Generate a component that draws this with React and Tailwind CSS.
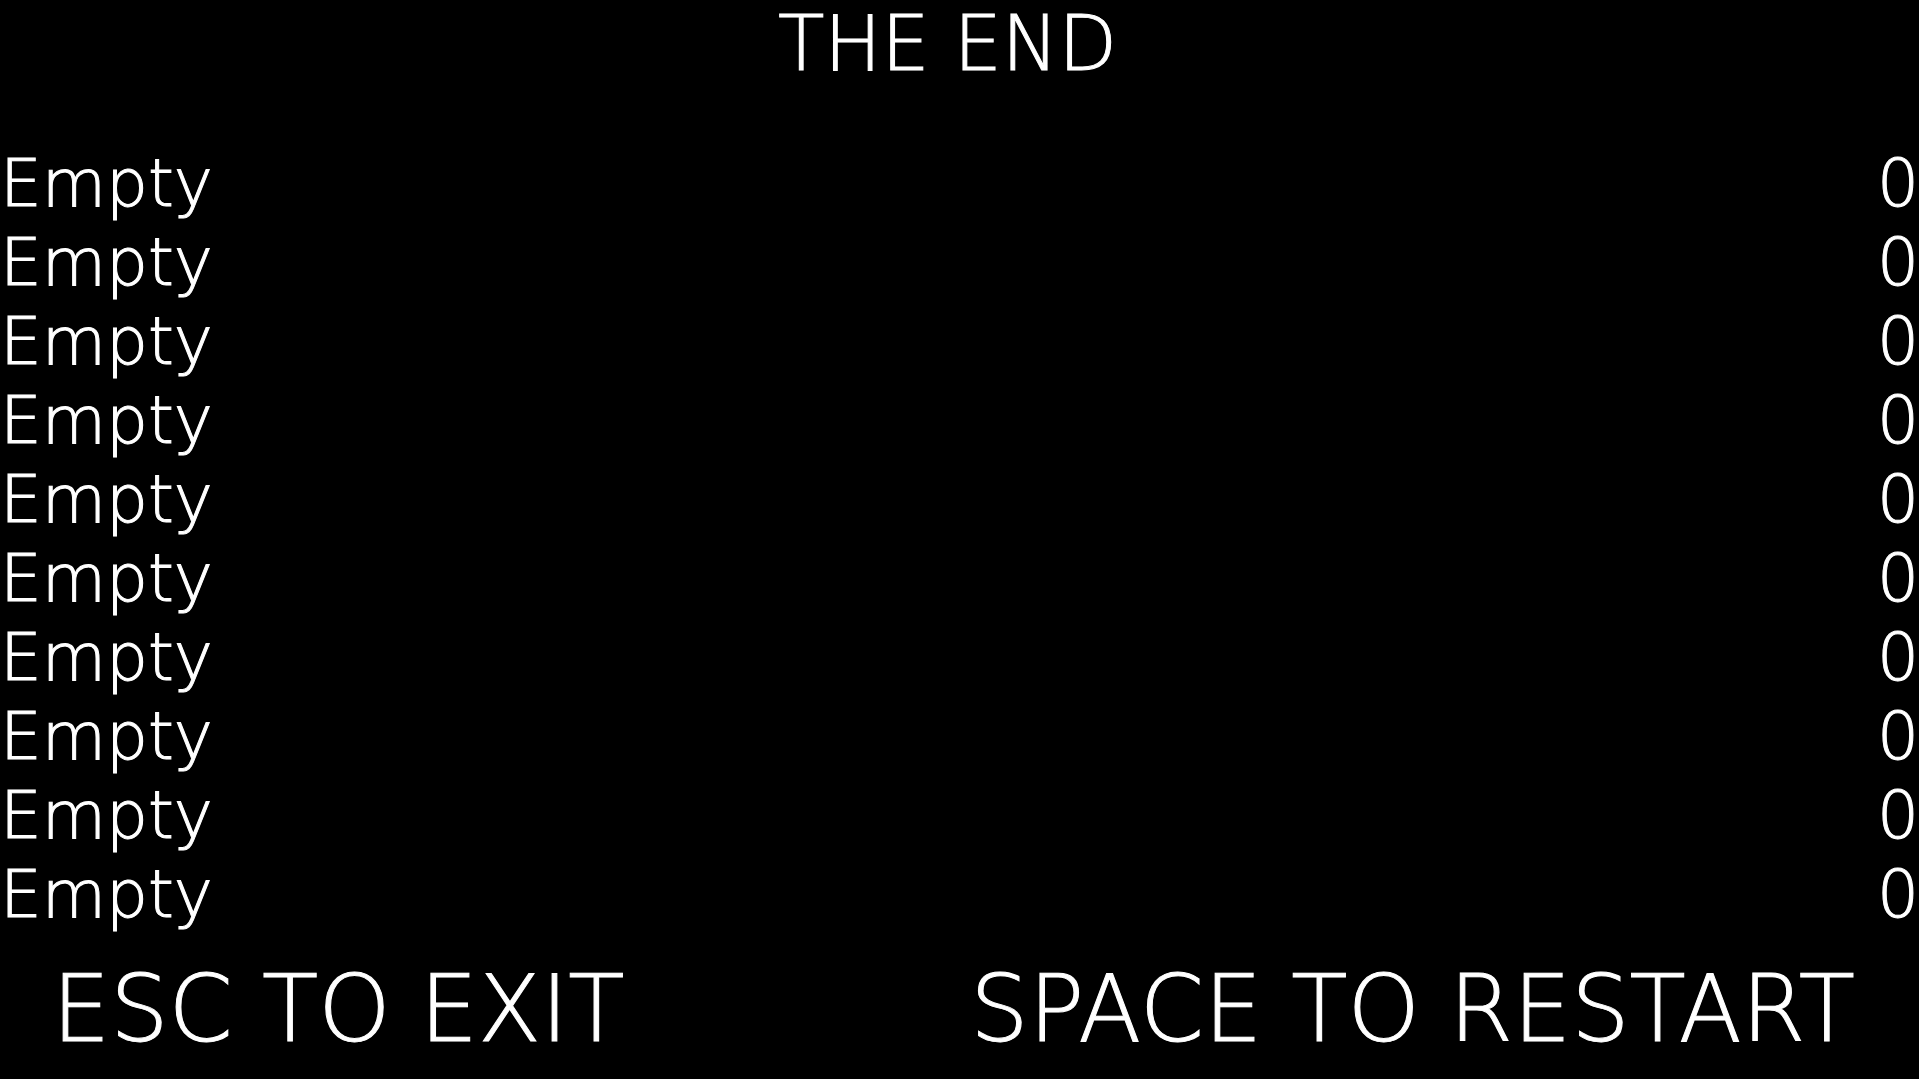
import { useState } from 'react';

const emptyScores = Array.from({ length: 10 }, (_, i) => ({
  id: i,
  name: 'Empty',
  score: 0,
}));

const ScoreTable = ({ scores }) => {
  return (
    <table className="w-full text-[66px] leading-none" aria-label="High scores">
      <tbody>
        {scores.map((entry) => (
          <tr key={entry.id} className="h-[79px]">
            <td className="p-0 text-left">{entry.name}</td>
            <td className="p-0 text-right">{entry.score}</td>
          </tr>
        ))}
      </tbody>
    </table>
  );
};

const App = () => {
  const [scores] = useState(emptyScores);

  return (
    <main className="min-h-screen bg-black font-['DejaVu_Sans',sans-serif] font-extralight text-white [-webkit-text-stroke:1px_white]">
      <h1 className="mb-14 pr-6 text-center text-[76px] leading-[88px]">THE END</h1>

      <ScoreTable scores={scores} />

      <div className="flex items-center justify-between pt-8 pr-16 pl-13 text-[92px] leading-[88px]">
        <button type="button" className="whitespace-nowrap">ESC TO EXIT</button>
        <button type="button" className="whitespace-nowrap">SPACE TO RESTART</button>
      </div>
    </main>
  );
};

export default App;
